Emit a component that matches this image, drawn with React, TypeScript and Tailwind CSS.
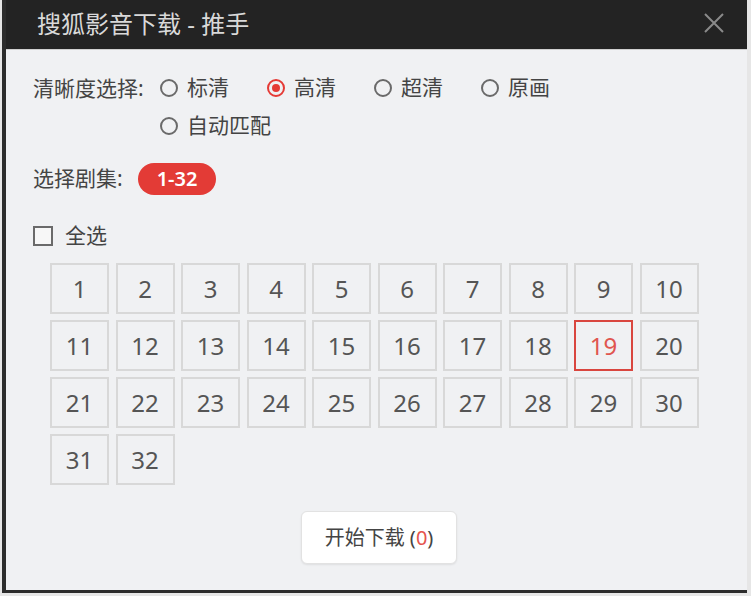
import { useState } from 'react';

const QUALITIES = ['标清', '高清', '超清', '原画', '自动匹配'];
const EPISODES = Array.from({ length: 32 }, (_, i) => i + 1);

export default function App() {
  const [quality, setQuality] = useState('高清');
  const [current] = useState(19);

  return (
    <div
      className="w-[751px] h-[596px] bg-[#e6e6e6] pl-[2px] overflow-hidden"
      style={{ fontFamily: '"Noto Sans", "Noto Sans CJK SC", sans-serif' }}
    >
      <div className="w-[745px] h-[593px] border-l-4 border-b-[3px] border-[#2c2c2c] bg-[#f0f1f3] flex flex-col">
        {/* Title bar */}
        <div className="h-[50px] bg-[#232323] flex items-center justify-between pl-[31px] pr-[22px] border-b border-[#d0d0d0]">
          <span className="text-[24px] text-[#d9d9d9] leading-none -mt-[2px]">搜狐影音下载 - 推手</span>
          <svg width="22" height="22" viewBox="0 0 22 22" className="-mt-[3px]">
            <path d="M2 2 L20 20 M20 2 L2 20" stroke="#8a8a8a" strokeWidth="2" />
          </svg>
        </div>

        <div className="pl-[27px] text-[#444] text-[21px]">
          {/* Quality */}
          <div className="flex mt-[26px]">
            <span className="w-[127px] leading-[24px] whitespace-nowrap">清晰度选择:</span>
            <div className="flex flex-wrap w-[430px] gap-y-[14px]">
              {QUALITIES.map((q) => {
                const on = q === quality;
                return (
                  <button
                    key={q}
                    onClick={() => setQuality(q)}
                    className="w-[107px] h-[24px] flex items-center gap-[9px] text-left"
                  >
                    <span
                      className={
                        on
                          ? 'w-[18px] h-[18px] shrink-0 rounded-full border-2 border-[#e53a35] flex items-center justify-center'
                          : 'w-[18px] h-[18px] shrink-0 rounded-full border-2 border-[#6a6a6a]'
                      }
                    >
                      {on && <span className="w-[8px] h-[8px] rounded-full bg-[#e53a35]" />}
                    </span>
                    <span className="whitespace-nowrap">{q}</span>
                  </button>
                );
              })}
            </div>
          </div>

          {/* Episodes range */}
          <div className="flex items-center mt-[25px] h-[32px]">
            <span className="w-[105px] whitespace-nowrap">选择剧集:</span>
            <span className="h-[32px] w-[78px] rounded-full bg-[#e33b36] text-white font-semibold text-[20px] flex items-center justify-center">
              1-32
            </span>
          </div>

          {/* Select all */}
          <label className="flex items-center gap-[12px] mt-[29px] h-[24px]">
            <span className="w-[20px] h-[20px] border-2 border-[#6a6a6a] bg-[#f7f7f7]" />
            <span>全选</span>
          </label>

          {/* Grid */}
          <div className="grid grid-cols-[repeat(10,59px)] auto-rows-[51px] gap-x-[6.5px] gap-y-[6px] mt-[15px] ml-[17px]">
            {EPISODES.map((n) => (
              <div
                key={n}
                className={
                  n === current
                    ? 'border-2 border-[#d9463f] text-[#e0554f] text-[24px] flex items-center justify-center'
                    : 'border-2 border-[#d8d8d8] text-[#555] text-[24px] flex items-center justify-center'
                }
              >
                {n}
              </div>
            ))}
          </div>

          {/* Download */}
          <div className="flex justify-center mt-[26px] pr-[22px]">
            <button className="w-[156px] h-[53px] bg-white rounded-[6px] border border-[#e2e2e2] shadow-[0_1px_2px_rgba(0,0,0,0.08)] text-[20px] text-[#444]">
              开始下载 (<span className="text-[#e5534d]">0</span>)
            </button>
          </div>
        </div>
      </div>
    </div>
  );
}
